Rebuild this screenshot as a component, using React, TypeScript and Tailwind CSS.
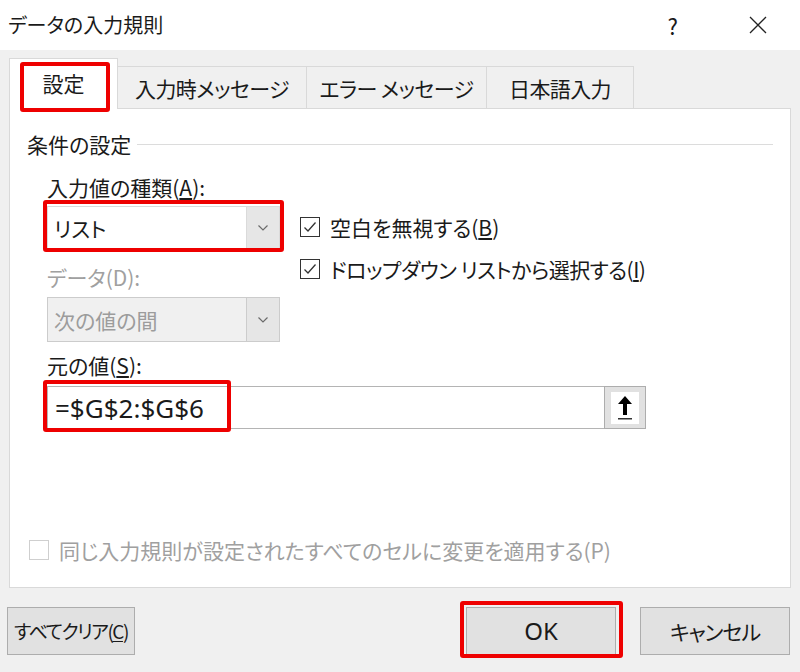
import type { ReactNode } from 'react'

const font = "font-['Yu_Gothic_UI','Noto_Sans_CJK_JP',sans-serif] [font-feature-settings:'palt']"

function RedBox({ className }: { className: string }) {
  return <span className={`pointer-events-none absolute border-4 border-[#ee0000] rounded-[3px] ${className}`} />
}

function Chevron({ color = '#6b6b6b' }: { color?: string }) {
  return (
    <svg width="12" height="8" viewBox="0 0 12 8" fill="none">
      <path d="M1.5 1.5 6 6l4.5-4.5" stroke={color} strokeWidth="1.2" />
    </svg>
  )
}

function Check({ checked, disabled }: { checked?: boolean; disabled?: boolean }) {
  return (
    <span
      className={`flex h-[20px] w-[20px] shrink-0 items-center justify-center border-[1.5px] bg-white ${
        disabled ? 'border-[#cfcfcf]' : 'border-[#333333]'
      }`}
    >
      {checked && (
        <svg width="14" height="12" viewBox="0 0 14 12" fill="none">
          <path d="M1.5 6.5 5 10l7.5-8.5" stroke="#333333" strokeWidth="1.3" />
        </svg>
      )}
    </span>
  )
}

function Tab({ children, active, width = '' }: { children: ReactNode; active?: boolean; width?: string }) {
  if (active) {
    return (
      <div className="relative z-10 -mb-px flex h-[51px] w-[109px] items-center justify-center border border-b-0 border-[#d9d9d9] bg-white pb-[2px]">
        {children}
        <RedBox className="left-[10px] right-[7px] top-[3px] -bottom-[3px]" />
      </div>
    )
  }
  return (
    <div
      className={`-ml-px flex h-[42px] items-center justify-center whitespace-nowrap border border-b-0 border-[#d9d9d9] bg-[#f0f0f0] tracking-[-0.6px] ${width}`}
    >
      {children}
    </div>
  )
}

function Button({ children, className = '' }: { children: ReactNode; className?: string }) {
  return (
    <div
      className={`flex h-[48px] shrink-0 items-center justify-center whitespace-nowrap border border-[#adadad] bg-[#e1e1e1] ${className}`}
    >
      {children}
    </div>
  )
}

export default function App() {
  return (
    <div className={`flex h-[672px] w-[800px] flex-col bg-[#f0f0f0] text-[21px] leading-[26px] text-[#1a1a1a] ${font}`}>
      {/* title bar */}
      <div className="flex h-[50px] shrink-0 items-center bg-white pl-[8px]">
        <span className="text-[20px]">データの入力規則</span>
        <span className="ml-auto mr-[71px] text-[22px]">?</span>
        <svg className="mr-[33px]" width="18" height="18" viewBox="0 0 18 18" fill="none">
          <path d="M1 1l16 16M17 1 1 17" stroke="#222222" strokeWidth="1.3" />
        </svg>
      </div>

      {/* tabs */}
      <div className="mt-[8px] flex items-end px-[9px]">
        <Tab active>設定</Tab>
        <Tab width="w-[190px]">入力時メッセージ</Tab>
        <Tab width="w-[181px]">エラー メッセージ</Tab>
        <Tab width="w-[148px]">日本語入力</Tab>
      </div>

      {/* panel */}
      <div className="mx-[9px] flex h-[480px] flex-col border border-[#d9d9d9] bg-white">
        <div className="mt-[22px] flex items-center pl-[17px] pr-[17px]">
          <span>条件の設定</span>
          <span className="ml-[6px] h-px flex-1 bg-[#dcdcdc]" />
        </div>

        <div className="pl-[37px]">
          <div className="mt-[17px]">
            入力値の種類(<span className="underline underline-offset-2">A</span>):
          </div>

          <div className="flex">
            <div className="w-[233px]">
              <div className="relative mt-[6px] flex h-[43px] items-stretch border border-[#dadada] bg-white">
                <span className="flex flex-1 items-center pl-[6px]">リスト</span>
                <span className="flex w-[33px] items-center justify-center border-l border-[#dadada] bg-[#e6e6e6]">
                  <Chevron />
                </span>
                <RedBox className="-left-[5px] -right-[5px] -top-[7px] -bottom-[4px]" />
              </div>

              <div className="mt-[15px] text-[#a0a0a0]">データ(D):</div>

              <div className="mt-[7px] flex h-[45px] items-stretch border border-[#cccccc] bg-[#f0f0f0]">
                <span className="flex flex-1 items-center pl-[6px] text-[#9c9c9c]">次の値の間</span>
                <span className="flex w-[33px] items-center justify-center border-l border-[#cccccc] bg-[#e6e6e6]">
                  <Chevron />
                </span>
              </div>
            </div>

            <div className="ml-[20px] flex flex-col gap-[16px] pt-[14px]">
              <div className="flex items-center gap-[10px]">
                <Check checked />
                <span>
                  空白を無視する(<span className="underline underline-offset-2">B</span>)
                </span>
              </div>
              <div className="flex items-center gap-[10px]">
                <Check checked />
                <span className="tracking-[-0.5px]">
                  ドロップダウン リストから選択する(<span className="underline underline-offset-2">I</span>)
                </span>
              </div>
            </div>
          </div>

          <div className="mt-[10px]">
            元の値(<span className="underline underline-offset-2">S</span>):
          </div>

          <div className="mt-[8px] flex h-[43px] w-[599px]">
            <div className="relative flex flex-1 items-center border border-r-0 border-[#b4b4b4] bg-white pl-[7px] font-['Noto_Sans',sans-serif] text-[26px]">
              =$G$2:$G$6
              <RedBox className="-left-[5px] -top-[7px] -bottom-[4px] w-[188px]" />
            </div>
            <div className="flex w-[42px] items-center justify-center border border-[#adadad] bg-[#e1e1e1]">
              <span className="flex h-[32px] w-[28px] items-center justify-center bg-white">
                <svg width="18" height="26" viewBox="0 0 18 26">
                  <path d="M9 1 2 9h5v11h4V9h5z" fill="#000000" />
                  <rect x="2" y="23" width="14" height="1.5" fill="#333333" />
                </svg>
              </span>
            </div>
          </div>
        </div>

        <div className="mt-auto mb-[24px] flex items-center gap-[10px] pl-[19px] text-[#a0a0a0]">
          <Check disabled />
          <span>同じ入力規則が設定されたすべてのセルに変更を適用する(P)</span>
        </div>
      </div>

      {/* buttons */}
      <div className="mt-[19px] flex px-[7px]">
        <Button className="w-[128px] text-[19px] tracking-[-1.5px]">
          すべてクリア(<span className="underline underline-offset-2">C</span>)
        </Button>
        <div className="relative ml-auto">
          <Button className="w-[150px] border-[#0078d7] font-['Noto_Sans',sans-serif] text-[24px]">OK</Button>
          <RedBox className="-left-[6px] -right-[7px] -top-[6px] -bottom-[3px]" />
        </div>
        <Button className="ml-[24px] w-[150px] tracking-[-1px]">キャンセル</Button>
        <span className="w-[3px]" />
      </div>
    </div>
  )
}
